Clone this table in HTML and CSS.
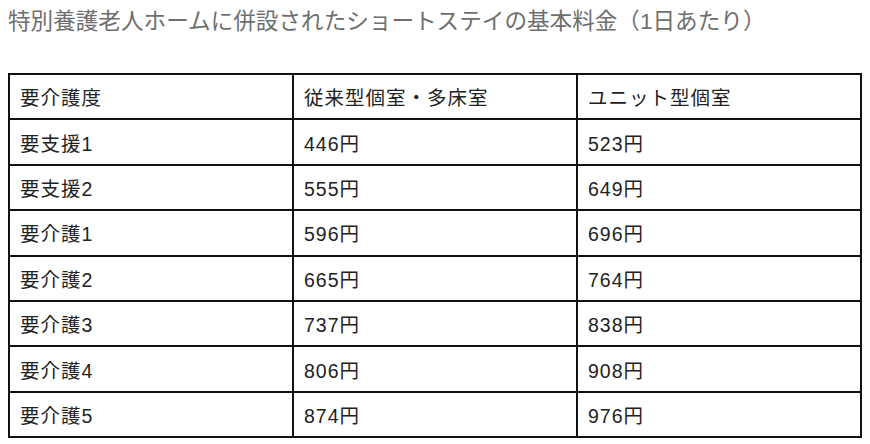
FILE: index.html
```html
<!DOCTYPE html>
<html lang="ja">
<head>
<meta charset="utf-8">
<link rel="stylesheet" href="styles.css">
</head>
<body>
<h2 class="title">特別養護老人ホームに併設されたショートステイの基本料金（1日あたり）</h2>
<table class="fee">
<tr><td>要介護度</td><td>従来型個室・多床室</td><td>ユニット型個室</td></tr>
<tr><td>要支援1</td><td>446円</td><td>523円</td></tr>
<tr><td>要支援2</td><td>555円</td><td>649円</td></tr>
<tr><td>要介護1</td><td>596円</td><td>696円</td></tr>
<tr><td>要介護2</td><td>665円</td><td>764円</td></tr>
<tr><td>要介護3</td><td>737円</td><td>838円</td></tr>
<tr><td>要介護4</td><td>806円</td><td>908円</td></tr>
<tr><td>要介護5</td><td>874円</td><td>976円</td></tr>
</table>
</body>
</html>
```
FILE: styles.css
```css
html, body { background: #fff; }
body {
  margin: 8px;
  font-family: "Liberation Sans", "Noto Sans CJK JP", sans-serif;
  color: #222;
}
.title {
  margin: 0;
  font-size: 22.6px;
  font-weight: normal;
  line-height: 28px;
  color: #6e6e6e;
}
.fee {
  margin-top: 37px;
  width: 854px;
  border-collapse: collapse;
  table-layout: fixed;
  border: 2px solid #111;
}
.fee td {
  border: 2px solid #111;
  height: 43.4px;
  padding: 0 10px;
  font-size: 19.5px;
  letter-spacing: 1px;
  vertical-align: middle;
}
```
